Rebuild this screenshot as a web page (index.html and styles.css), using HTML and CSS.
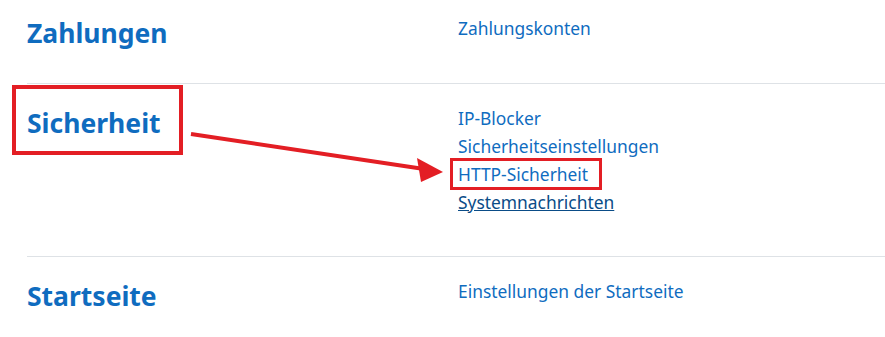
FILE: index.html
```html
<!DOCTYPE html>
<html lang="de">
<head>
<meta charset="utf-8">
<title>Website-Administration</title>
<link rel="stylesheet" href="styles.css">
</head>
<body>
<main class="admin">
  <section class="row row-first">
    <h2 class="heading">Zahlungen</h2>
    <ul class="links">
      <li><a href="#">Zahlungskonten</a></li>
    </ul>
  </section>
  <section class="row row-middle">
    <h2 class="heading">Sicherheit</h2>
    <ul class="links">
      <li><a href="#">IP-Blocker</a></li>
      <li><a href="#">Sicherheitseinstellungen</a></li>
      <li><a href="#">HTTP-Sicherheit</a></li>
      <li><a href="#" class="hover">Systemnachrichten</a></li>
    </ul>
  </section>
  <section class="row">
    <h2 class="heading">Startseite</h2>
    <ul class="links">
      <li><a href="#">Einstellungen der Startseite</a></li>
    </ul>
  </section>
</main>
<div class="mark mark-heading"></div>
<div class="mark mark-link"></div>
<svg class="arrow" width="885" height="337" viewBox="0 0 885 337" aria-hidden="true">
  <line x1="191" y1="134" x2="424" y2="169" stroke="#e31e24" stroke-width="4"/>
  <polygon points="443,172 417,158 421,182" fill="#e31e24"/>
</svg>
</body>
</html>
```
FILE: styles.css
```css
html, body {
  margin: 0;
  padding: 0;
  background: #ffffff;
}
body {
  width: 885px;
  height: 337px;
  overflow: hidden;
  position: relative;
  font-family: "Noto Sans", "Open Sans", sans-serif;
}
.admin {
  padding-left: 27px;
}
.row {
  display: grid;
  grid-template-columns: 431px 1fr;
  border-top: 1px solid #dee2e6;
  padding: 22px 0 22px;
}
.row-first {
  border-top: none;
  padding-top: 16px;
  padding-bottom: 22px;
  height: 45px;
}
.row-middle {
  height: 128px;
}
.heading {
  margin: 0;
  font-size: 26.5px;
  line-height: 34px;
  font-weight: 700;
  color: #0f6cbf;
}
.links {
  list-style: none;
  margin: -2px 0 0;
  padding: 0;
}
.links li {
  line-height: 28px;
  font-size: 17.4px;
}
.links a {
  color: #0f6cbf;
  text-decoration: none;
}
.links a.hover {
  color: #0a4c87;
  text-decoration: underline;
}
.mark {
  position: absolute;
  box-sizing: border-box;
  border: 4px solid #e31e24;
}
.mark-heading {
  left: 12px;
  top: 85px;
  width: 171px;
  height: 70px;
}
.mark-link {
  left: 450px;
  top: 158px;
  width: 152px;
  height: 32px;
  border-width: 3px;
}
.arrow {
  position: absolute;
  left: 0;
  top: 0;
}
```
